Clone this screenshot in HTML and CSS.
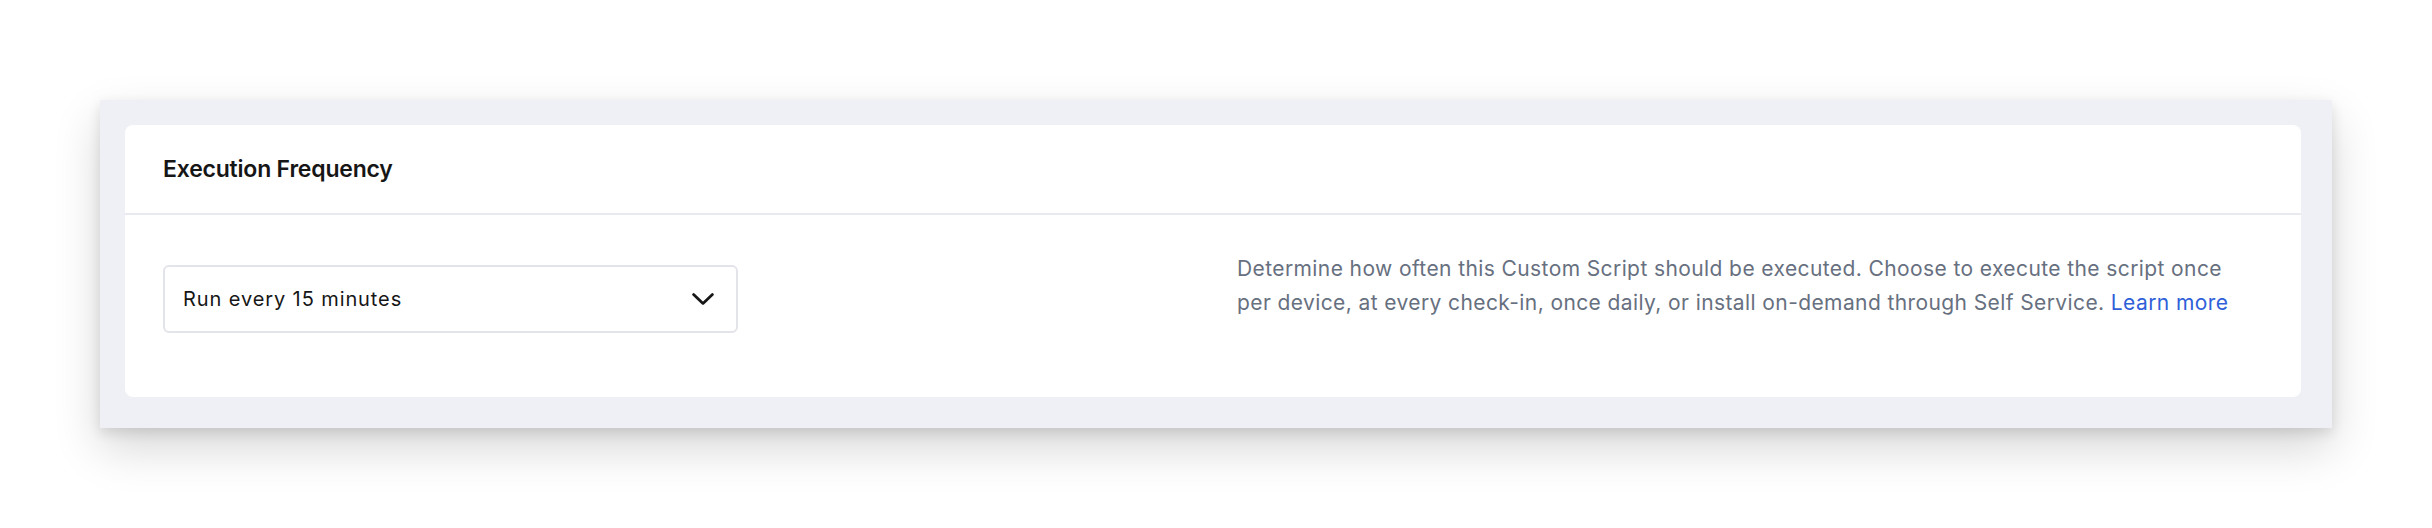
FILE: index.html
```html
<!DOCTYPE html>
<html lang="en">
<head>
<meta charset="utf-8">
<title>Execution Frequency</title>
<link rel="stylesheet" href="styles.css">
</head>
<body>
<div class="stage">
  <section class="panel">
    <div class="card">
      <header class="card-header">
        <h2 class="card-title">Execution Frequency</h2>
      </header>
      <div class="card-body">
        <div class="field">
          <div class="select">
            <span class="select-value">Run every 15 minutes</span>
            <svg class="chevron" width="22" height="12" viewBox="0 0 22 12" aria-hidden="true">
              <path d="M1.6 1.6 L11 10.4 L20.4 1.6" fill="none" stroke="#161616" stroke-width="2.8" stroke-linecap="round" stroke-linejoin="round"/>
            </svg>
          </div>
        </div>
        <p class="description">Determine how often this Custom Script should be executed. Choose to execute the script once per device, at every check-in, once daily, or install on-demand through Self Service. <a class="link" href="#">Learn more</a></p>
      </div>
    </div>
  </section>
</div>
</body>
</html>
```

FILE: styles.css
```css
html, body {
  margin: 0;
  padding: 0;
  background: #ffffff;
}

body {
  font-family: Inter, "Noto Sans", "Liberation Sans", sans-serif;
  color: #161616;
}

.stage {
  padding: 100px 100px 100px 100px;
}

.panel {
  width: 2232px;
  box-sizing: border-box;
  background: #eff0f5;
  padding: 25px 31px 31px 25px;
  box-shadow: 0 20px 44px rgba(0, 0, 0, 0.16), 0 5px 12px rgba(0, 0, 0, 0.11);
}

.card {
  background: #ffffff;
  border-radius: 8px;
}

.card-header {
  height: 88px;
  display: flex;
  align-items: center;
  padding: 0 38px;
  border-bottom: 2px solid #e9eaef;
}

.card-title {
  margin: 0;
  font-size: 23px;
  font-weight: 600;
  letter-spacing: -0.2px;
  color: #161616;
}

.card-body {
  display: grid;
  grid-template-columns: 1fr 1fr;
  column-gap: 48px;
  align-items: start;
  padding: 37px 38px 64px;
}

.field {
  padding-top: 13px;
}

.select {
  width: 575px;
  height: 68px;
  box-sizing: border-box;
  border: 2px solid #e3e4e9;
  border-radius: 6px;
  display: flex;
  align-items: center;
  justify-content: space-between;
  padding: 0 22px 0 18px;
}

.select-value {
  font-size: 20px;
  letter-spacing: 0.9px;
  color: #161616;
}

.chevron {
  display: block;
}

.description {
  margin: 0;
  max-width: 1005px;
  font-size: 21px;
  line-height: 34px;
  letter-spacing: 0.4px;
  color: #677080;
}

.link {
  color: #2f5fd9;
  text-decoration: none;
}
```
